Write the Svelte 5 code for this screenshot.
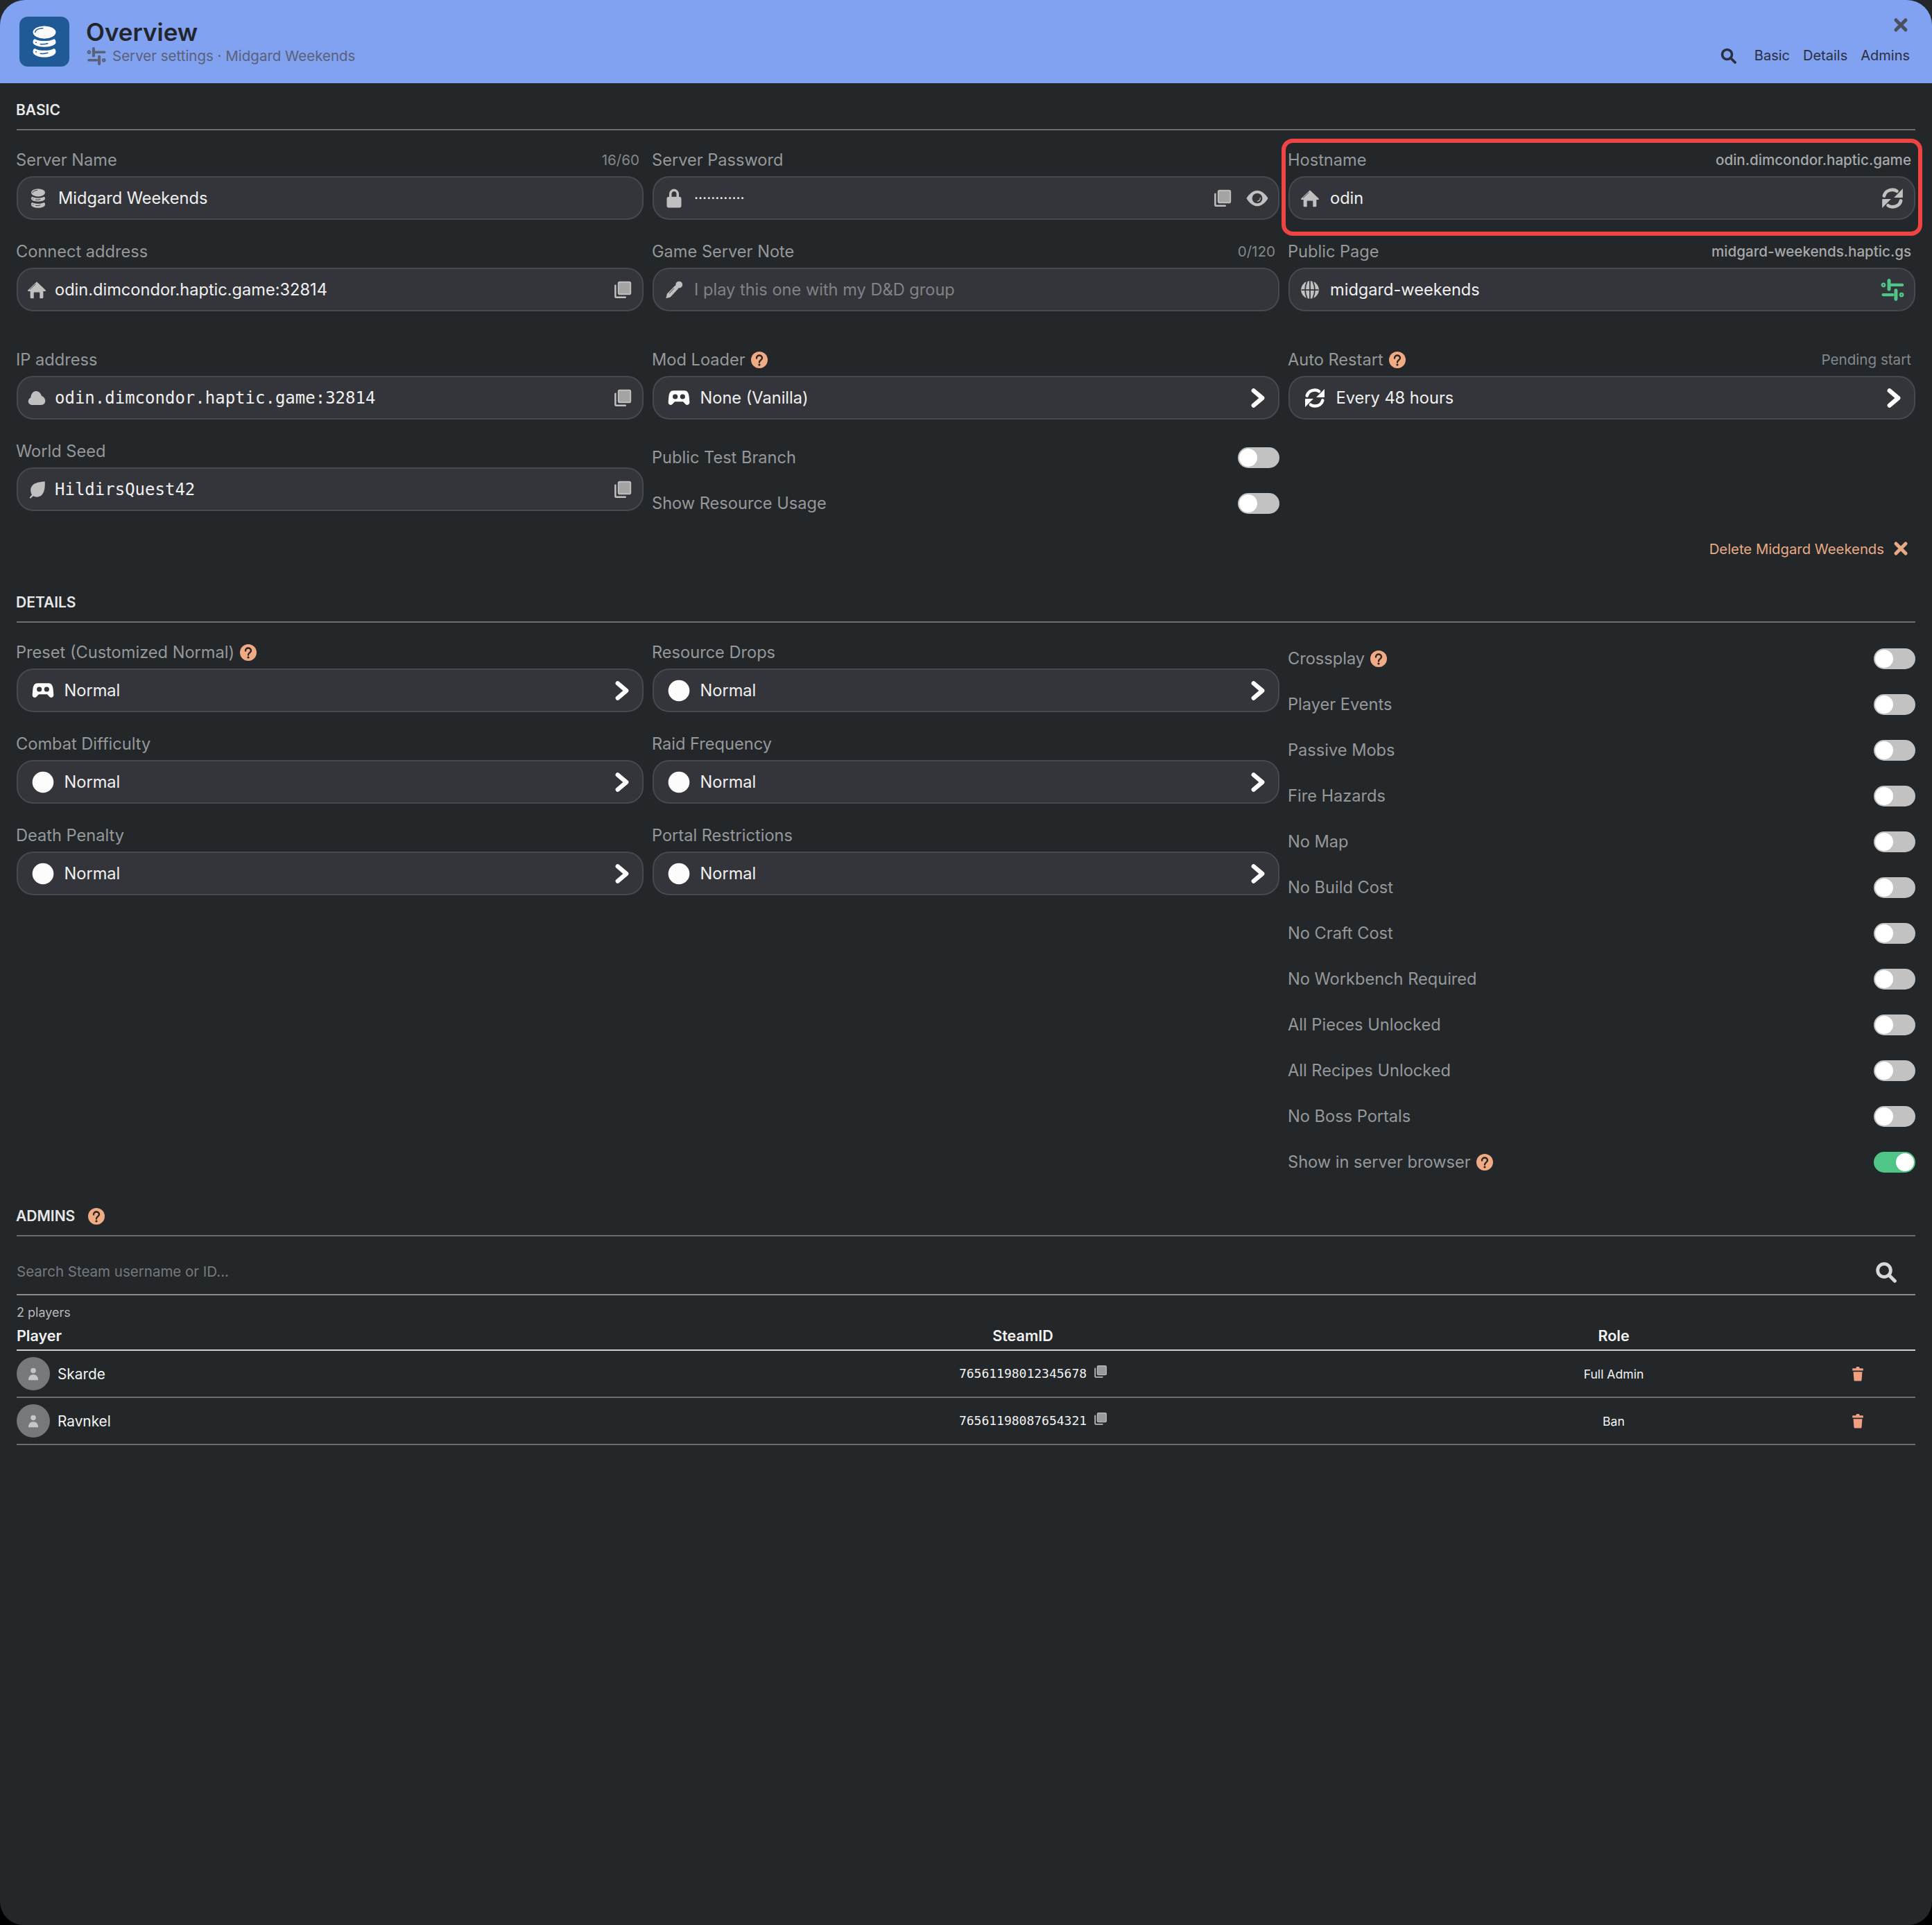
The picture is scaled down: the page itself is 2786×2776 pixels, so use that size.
<script>
  const hostSuffix = 'odin.dimcondor.haptic.game';

  const detailLeft = [
    { label: 'Preset (Customized Normal)', help: true, icon: 'pad', value: 'Normal' },
    { label: 'Combat Difficulty', icon: 'disc', value: 'Normal' },
    { label: 'Death Penalty', icon: 'disc', value: 'Normal' }
  ];
  const detailMid = [
    { label: 'Resource Drops', icon: 'disc', value: 'Normal' },
    { label: 'Raid Frequency', icon: 'disc', value: 'Normal' },
    { label: 'Portal Restrictions', icon: 'disc', value: 'Normal' }
  ];
  const toggles = [
    { label: 'Crossplay', help: true },
    { label: 'Player Events' },
    { label: 'Passive Mobs' },
    { label: 'Fire Hazards' },
    { label: 'No Map' },
    { label: 'No Build Cost' },
    { label: 'No Craft Cost' },
    { label: 'No Workbench Required' },
    { label: 'All Pieces Unlocked' },
    { label: 'All Recipes Unlocked' },
    { label: 'No Boss Portals' },
    { label: 'Show in server browser', help: true, on: true }
  ];
  const admins = [
    { name: 'Skarde', id: '76561198012345678', role: 'Full Admin' },
    { name: 'Ravnkel', id: '76561198087654321', role: 'Ban' }
  ];
</script>

{#snippet icon(name, cls = '')}
  <svg class="ic {cls}" viewBox="0 0 24 24" aria-hidden="true">
    {#if name === 'db'}
      <ellipse cx="12" cy="5" rx="8.6" ry="4.8" fill="currentColor" />
      <path d="M3.400 12.500c0-1.300.5-2.300 1.300-2.500 1.800 1 4.400 1.500 7.300 1.500s5.500-.5 7.300-1.500c.8.200 1.300 1.200 1.300 2.500 0 2-3.800 3.500-8.600 3.500s-8.600-1.500-8.600-3.500z" fill="currentColor" />
      <path d="M3.400 19.700c0-1.300.5-2.300 1.300-2.500 1.800 1 4.400 1.500 7.300 1.500s5.500-.5 7.300-1.500c.8.200 1.300 1.200 1.300 2.500 0 2.300-3.800 4.100-8.600 4.100s-8.600-1.800-8.600-4.100z" fill="currentColor" />
      <path d="M5 5c.3-1.500 2.500-2.800 5.800-3M5.500 12.700h.4M9 13.900c2 .2 4 0 5.500-.5M5.500 19.700h.4M9 21c2 .2 4 0 5.500-.5" fill="none" class="cut" stroke-width=".8" stroke-linecap="round" />
    {:else if name === 'home'}
      <path d="M12 2 23 12.500c.4.600 0 1.200-.7 1.200H20v7.800c0 .5-.4.900-.9.900h-3.400v-6.300c0-.6-.4-1-1-1H9.300c-.6 0-1 .4-1 1v6.300H4.900c-.5 0-.9-.4-.9-.9v-7.800H1.700c-.7 0-1.100-.6-.7-1.200z" fill="currentColor" />
      <path d="M3.500 11.500 10.500 5" fill="none" class="cut" stroke-width=".7" stroke-linecap="round" />
    {:else if name === 'copy'}
      <path d="M3.500 7v12.500c0 .6.400 1 1 1H15" fill="none" stroke="currentColor" stroke-width="2" stroke-linecap="round" />
      <rect x="7" y="3" width="14" height="14" rx="1.500" fill="currentColor" opacity=".8" />
      <rect x="7" y="3" width="14" height="14" rx="1.500" fill="none" stroke="currentColor" stroke-width="1.500" />
    {:else if name === 'eye'}
      <path d="M1 12C4 7 8 4 12 4s8 3 11 8c-3 5-7 8-11 8S4 17 1 12z" fill="currentColor" />
      <circle cx="12" cy="12" r="5.200" class="cutfill" />
      <path d="M15 11.500c.2 1.800-1 3.200-2.800 3.500" fill="none" stroke="currentColor" stroke-width=".8" stroke-linecap="round" />
    {:else if name === 'lock'}
      <path d="M7.500 12V6.500a4.500 4.500 0 0 1 9 0V12" fill="none" stroke="currentColor" stroke-width="3" />
      <rect x="3" y="10" width="18" height="13.500" rx="2.500" fill="currentColor" />
    {:else if name === 'pencil'}
      <circle cx="18.200" cy="5.600" r="4.200" fill="currentColor" />
      <path d="M13.800 6.200 17.600 10 7.500 21l-5.500 1.500L3.300 17z" fill="currentColor" />
      <path d="M12 10 6 16.500" class="cut" fill="none" stroke-width=".8" />
    {:else if name === 'cloud'}
      <path d="M6.500 20.500C3.500 20.500 1.500 18.500 1.500 16c0-2.200 1.500-4 3-4.500C5 7 7.500 3.500 11 3.500c3.500 0 6 2.500 7 6 2.500.8 4.500 3.200 4.500 6 0 3-2 5-5 5z" fill="currentColor" />
    {:else if name === 'leaf'}
      <path d="M22 2c.5 7-.5 13-3.500 16.500-3 3-7.500 3.500-11 1.500L4.500 23l-1.500-1 3-3.500C3.500 14 4 9 7.500 6 11 3.300 16.500 2.500 22 2z" fill="currentColor" />
    {:else if name === 'globe'}
      <circle cx="12" cy="12" r="11" fill="currentColor" />
      <path d="M12 1v22M1.500 12h21M8.500 1.500C5.500 8 5.500 16 8.500 22.500M15.500 1.500c3 6.500 3 14.500 0 21" fill="none" class="cut" stroke-width="1.500" />
    {:else if name === 'pad'}
      <path d="M6 4h12c3 0 4.500 2.500 5 6.500l.5 6c.2 2.500-2.500 4-4.500 2l-2.500-2.500h-9L5 18.500c-2 2-4.700.5-4.500-2l.5-6C1.500 6.500 3 4 6 4z" fill="currentColor" />
      <circle cx="8" cy="10.500" r="2.700" class="cutfill" />
      <circle cx="16" cy="10.500" r="2.700" class="cutfill" />
    {:else if name === 'disc'}
      <circle cx="12" cy="12" r="11.500" fill="currentColor" />
    {:else if name === 'refresh'}
      <g fill="none" stroke="currentColor" stroke-width="3.400" stroke-linecap="round">
        <path d="M3.500 9.500C4.500 5.500 8 3.300 12 3.300c1.800 0 3.300.5 4.500 1.400" />
        <path d="M20.500 14.500c-1 4-4.500 6.200-8.500 6.200-1.800 0-3.300-.5-4.500-1.400" />
      </g>
      <path d="M22.500 2.200v8.300c0 .5-.3.800-.8.800h-8.200z" fill="currentColor" />
      <path d="M1.500 21.800v-8.300c0-.5.300-.8.800-.8h8.200z" fill="currentColor" />
    {:else if name === 'sliders'}
      <g fill="none" stroke="currentColor" stroke-linecap="round">
        <circle cx="2.800" cy="7" r="1.500" stroke-width="1.800" />
        <path d="M8.500 2.500v9" stroke-width="3.500" />
        <path d="M9.500 7h12.500" stroke-width="3" />
        <path d="M2.500 17h10" stroke-width="3" />
        <path d="M15.500 12.500v9" stroke-width="3.500" />
        <circle cx="21.200" cy="17" r="1.500" stroke-width="1.800" />
      </g>
    {:else if name === 'chev'}
      <path d="M7 3.500 17 12 7 20.500" fill="none" stroke="currentColor" stroke-width="5" stroke-linecap="round" stroke-linejoin="round" />
    {:else if name === 'x'}
      <path d="M5 5 19 19M19 5 5 19" fill="none" stroke="currentColor" stroke-width="5" stroke-linecap="round" />
    {:else if name === 'search'}
      <circle cx="10.500" cy="10.500" r="7" fill="none" stroke="currentColor" stroke-width="3.600" />
      <path d="M16 16 22 22" fill="none" stroke="currentColor" stroke-width="3.800" stroke-linecap="round" />
    {:else if name === 'help'}
      <circle cx="12" cy="12" r="12" fill="#f0ab85" />
      <path d="M8 9.500c0-2.500 1.800-4 4-4s4 1.500 4 3.700c0 3.300-4 3-4 6.300" fill="none" stroke="#2a2420" stroke-width="2.400" stroke-linecap="round" />
      <circle cx="12" cy="19" r="1.600" fill="#2a2420" />
    {:else if name === 'trash'}
      <path d="M9 3.500 10 1h4l1 2.500h4.500c.6 0 1 .5 1 1V7h-17V4.500c0-.5.4-1 1-1z" fill="currentColor" />
      <path d="M5 9h14l-1 13c-.1.800-.7 1.500-1.500 1.500h-9C6.700 23.500 6.100 22.800 6 22z" fill="currentColor" />
    {:else if name === 'user'}
      <circle cx="12" cy="6.500" r="4.500" fill="currentColor" />
      <path d="M3.500 23c0-5.500 3-9.500 8.500-9.500s8.500 4 8.500 9.500z" fill="currentColor" />
    {/if}
  </svg>
{/snippet}

{#snippet label(text, help = false, hint = '', hintClass = '')}
  <div class="label-row">
    <span class="label">{text}</span>
    {#if help}{@render icon('help', 'help')}{/if}
    {#if hint}<span class="hint {hintClass}">{hint}</span>{/if}
  </div>
{/snippet}

{#snippet select(item)}
  <div class="cell">
    {@render label(item.label, item.help)}
    <div class="field">
      {@render icon(item.icon, 'lead wide bright')}
      <span class="value">{item.value}</span>
      {@render icon('chev', 'chev')}
    </div>
  </div>
{/snippet}

{#snippet switchRow(text, help, on)}
  <div class="switch-row">
    <span class="label">{text}</span>
    {#if help}{@render icon('help', 'help')}{/if}
    <span class="switch" class:on><span class="knob"></span></span>
  </div>
{/snippet}

<div class="window">
  <header class="top">
    <div class="logo">{@render icon('db', 'logo-ic')}</div>
    <div class="titles">
      <h1>Overview</h1>
      <div class="crumb">{@render icon('sliders', 'crumb-ic')}<span>Server settings · Midgard Weekends</span></div>
    </div>
    <div class="top-right">
      {@render icon('x', 'close')}
      <nav>
        {@render icon('search', 'nav-search')}
        <span>Basic</span><span>Details</span><span>Admins</span>
      </nav>
    </div>
  </header>

  <main class="content">
    <section>
      <h2 class="section-head">BASIC</h2>
      <div class="grid3">
        <div class="cell">
          {@render label('Server Name', false, '16/60')}
          <div class="field">
            {@render icon('db', 'lead dim')}
            <span class="value">Midgard Weekends</span>
          </div>
        </div>
        <div class="cell">
          {@render label('Server Password')}
          <div class="field">
            {@render icon('lock', 'lead dim')}
            <span class="value dots">············</span>
            {@render icon('copy', 'trail dim')}
            {@render icon('eye', 'eye dim')}
          </div>
        </div>
        <div class="cell">
          <div class="hostname-mark"></div>
          {@render label('Hostname', false, hostSuffix, 'strong')}
          <div class="field">
            {@render icon('home', 'lead dim')}
            <span class="value">odin</span>
            {@render icon('refresh', 'trail-lg dim')}
          </div>
        </div>

        <div class="cell">
          {@render label('Connect address')}
          <div class="field">
            {@render icon('home', 'lead tight dim')}
            <span class="value">odin.dimcondor.haptic.game:32814</span>
            {@render icon('copy', 'trail dim')}
          </div>
        </div>
        <div class="cell">
          {@render label('Game Server Note', false, '0/120')}
          <div class="field">
            {@render icon('pencil', 'lead dim')}
            <span class="value placeholder">I play this one with my D&amp;D group</span>
          </div>
        </div>
        <div class="cell">
          {@render label('Public Page', false, 'midgard-weekends.haptic.gs', 'strong')}
          <div class="field">
            {@render icon('globe', 'lead dim')}
            <span class="value">midgard-weekends</span>
            {@render icon('sliders', 'trail-lg green')}
          </div>
        </div>
      </div>

      <div class="grid3 lower">
        <div class="cell">
          {@render label('IP address')}
          <div class="field">
            {@render icon('cloud', 'lead tight dim')}
            <span class="value mono">odin.dimcondor.haptic.game:32814</span>
            {@render icon('copy', 'trail dim')}
          </div>
        </div>
        <div class="cell">
          {@render label('Mod Loader', true)}
          <div class="field">
            {@render icon('pad', 'lead wide bright')}
            <span class="value">None (Vanilla)</span>
            {@render icon('chev', 'chev')}
          </div>
        </div>
        <div class="cell">
          {@render label('Auto Restart', true, 'Pending start')}
          <div class="field">
            {@render icon('refresh', 'lead wide bright')}
            <span class="value">Every 48 hours</span>
            {@render icon('chev', 'chev')}
          </div>
        </div>

        <div class="cell">
          {@render label('World Seed')}
          <div class="field">
            {@render icon('leaf', 'lead tight dim')}
            <span class="value mono">HildirsQuest42</span>
            {@render icon('copy', 'trail dim')}
          </div>
        </div>
        <div class="switch-stack">
          {@render switchRow('Public Test Branch', false, false)}
          {@render switchRow('Show Resource Usage', false, false)}
        </div>
      </div>

      <div class="delete-row">
        <span>Delete Midgard Weekends</span>
        {@render icon('x', 'delete-x')}
      </div>
    </section>

    <section class="details">
      <h2 class="section-head">DETAILS</h2>
      <div class="grid3">
        <div class="stack">{#each detailLeft as item}{@render select(item)}{/each}</div>
        <div class="stack">{#each detailMid as item}{@render select(item)}{/each}</div>
        <div class="switch-stack">
          {#each toggles as t}{@render switchRow(t.label, t.help, t.on)}{/each}
        </div>
      </div>
    </section>

    <section class="admins">
      <h2 class="section-head">ADMINS {@render icon('help', 'help')}</h2>
      <div class="search">
        <span>Search Steam username or ID...</span>
        {@render icon('search', 'search-ic')}
      </div>
      <div class="count">2 players</div>
      <div class="table">
        <div class="row head">
          <span>Player</span>
          <span class="mid">SteamID</span>
          <span class="mid">Role</span>
          <span></span>
        </div>
        {#each admins as a}
          <div class="row">
            <div class="player">
              <span class="avatar">{@render icon('user', 'user-ic')}</span>
              <span>{a.name}</span>
            </div>
            <div class="mid">
              <span class="steam">{a.id}{@render icon('copy', 'id-copy')}</span>
            </div>
            <div class="mid role">{a.role}</div>
            <div class="mid">{@render icon('trash', 'trash')}</div>
          </div>
        {/each}
      </div>
    </section>
  </main>
</div>

<style>
  :global(body) {
    margin: 0;
    background: #000;
  }

  .window {
    min-height: 2776px;
    background: #23272a;
    border-radius: 0 0 34px 34px;
    color: #f2f2f2;
    font-family: Inter, 'Liberation Sans', sans-serif;
    font-size: 23.6px;
  }

  .ic {
    display: block;
    flex: none;
    width: 24px;
    height: 24px;
  }
  .cut {
    stroke: #1f5a96;
  }
  .cutfill {
    fill: #34353a;
  }

  /* header */
  .top {
    display: flex;
    align-items: center;
    height: 120px;
    box-sizing: border-box;
    padding: 0 32px 0 28px;
    background: #81a1f1;
    border-radius: 36px 36px 0 0;
    color: #22262c;
  }
  .logo {
    display: grid;
    place-items: center;
    width: 72px;
    height: 72px;
    border-radius: 12px;
    background: #1f5a96;
    color: #fbfbfb;
  }
  .logo-ic {
    width: 46px;
    height: 46px;
  }
  .titles {
    margin-left: 24px;
  }
  h1 {
    margin: 0;
    font-size: 35px;
    line-height: 40px;
    font-weight: 600;
  }
  .crumb {
    display: flex;
    align-items: center;
    gap: 9px;
    margin-top: 1px;
    font-size: 20.5px;
    line-height: 28px;
    color: #596278;
  }
  .crumb-ic {
    width: 28px;
    height: 28px;
    margin-left: 1px;
  }
  .top-right {
    display: flex;
    flex-direction: column;
    align-items: flex-end;
    margin-left: auto;
    height: 100%;
    padding-top: 24px;
    box-sizing: border-box;
  }
  .close {
    color: #4a5060;
    margin-right: 1px;
  }
  nav {
    display: flex;
    align-items: center;
    gap: 19px;
    margin-top: 18px;
    font-size: 20px;
    line-height: 28px;
    color: #2a3040;
  }
  .nav-search {
    width: 24px;
    height: 24px;
    margin-right: 7px;
  }

  /* sections */
  .content {
    padding: 27px 24px 0;
  }
  .section-head {
    display: flex;
    align-items: center;
    gap: 19px;
    margin: 0 0 26px;
    padding-bottom: 15px;
    border-bottom: 2px solid #6b6e71;
    font-size: 21px;
    line-height: 24px;
    font-weight: 600;
    color: #e8e8e8;
    text-indent: -1px;
  }
  .details,
  .admins {
    margin-top: 50px;
  }
  .grid3 {
    display: grid;
    grid-template-columns: repeat(3, 1fr);
    column-gap: 13px;
  }
  .grid3.lower {
    margin-top: 24px;
  }
  .stack {
    display: flex;
    flex-direction: column;
  }
  .cell {
    position: relative;
    height: 132px;
  }

  .label-row {
    display: flex;
    align-items: center;
    gap: 8px;
    height: 40px;
    box-sizing: border-box;
    padding: 0 6px 7px 0;
    margin-left: -1px;
  }
  .label {
    font-size: 23.6px;
    line-height: 32px;
    color: #96989a;
  }
  .hint {
    margin-left: auto;
    font-size: 20.6px;
    color: #84878a;
  }
  .hint.strong {
    font-weight: 500;
    color: #a6a8aa;
  }
  .help {
    width: 24px;
    height: 24px;
  }

  .field {
    display: flex;
    align-items: center;
    height: 63px;
    box-sizing: border-box;
    padding: 0 17px 0 15px;
    background: #34353a;
    border: 2px solid #46494d;
    border-radius: 24px;
  }
  .lead {
    width: 28px;
    height: 28px;
    margin-right: 15px;
  }
  .lead.tight {
    margin-left: -2px;
    margin-right: 12px;
  }
  .lead.wide {
    width: 32px;
    height: 32px;
    margin-left: 4.500px;
    margin-right: 15px;
  }
  .dim {
    color: #c0c0c0;
  }
  .dim .cut {
    stroke: #34353a;
  }
  .bright {
    color: #fcfcfc;
  }
  .green {
    color: #4fc586;
  }
  .value {
    flex: 1;
    font-size: 23.6px;
    color: #f0f0f0;
    white-space: nowrap;
  }
  .placeholder {
    color: #808285;
  }
  .mono {
    font-family: 'DejaVu Sans Mono', monospace;
    font-size: 24px;
  }
  .dots {
    font-size: 21px;
  }
  .trail {
    width: 30px;
    height: 30px;
    margin-right: -4px;
  }
  .trail-lg {
    width: 34px;
    height: 34px;
    margin-right: -3px;
  }
  .eye {
    width: 34px;
    height: 34px;
    margin-left: 22px;
    margin-right: -3.500px;
  }
  .chev {
    width: 30px;
    height: 30px;
    margin-right: -3px;
    color: #fcfcfc;
  }

  .hostname-mark {
    position: absolute;
    left: -10px;
    right: -10px;
    top: -14px;
    height: 140px;
    box-sizing: border-box;
    border: 6px solid #ef4444;
    border-radius: 16px;
    pointer-events: none;
  }

  /* switches */
  .switch-stack {
    display: flex;
    flex-direction: column;
    gap: 34px;
    padding-top: 10px;
  }
  .switch-row {
    display: flex;
    align-items: center;
    gap: 8px;
    height: 32px;
    margin-left: -1px;
  }
  .switch {
    position: relative;
    margin-left: auto;
    width: 60px;
    height: 30px;
    border-radius: 15px;
    background: #c2c2c2;
  }
  .switch.on {
    background: #4fc586;
  }
  .knob {
    position: absolute;
    left: 2px;
    top: 2px;
    width: 26px;
    height: 26px;
    border-radius: 50%;
    background: #fff;
  }
  .on .knob {
    left: 32px;
  }

  .delete-row {
    display: flex;
    justify-content: flex-end;
    align-items: center;
    gap: 12px;
    height: 32px;
    margin-top: 9px;
    padding-right: 9px;
    font-size: 20.3px;
    color: #eaa985;
  }
  .delete-x {
    width: 24px;
    height: 24px;
  }

  /* admins */
  .search {
    display: flex;
    align-items: center;
    justify-content: space-between;
    height: 85px;
    box-sizing: border-box;
    margin-top: -26px;
    padding: 18px 27px 0 0;
    border-bottom: 2px solid #8a8b8d;
    font-size: 20.5px;
    color: #76797b;
  }
  .search-ic {
    width: 32px;
    height: 32px;
    color: #d8d8d8;
  }
  .count {
    margin-top: 13px;
    font-size: 18px;
    line-height: 24px;
    color: #b8b8b8;
  }
  .row {
    display: grid;
    grid-template-columns: 868px 1166px 538px 166px;
    align-items: center;
    height: 68px;
    box-sizing: border-box;
    border-bottom: 2px solid #6b6e71;
    font-size: 20.8px;
  }
  .row.head {
    height: 43px;
    border-bottom-color: #cfcfcf;
    font-size: 21.5px;
    font-weight: 600;
    color: #f2f2f2;
  }
  .mid {
    display: flex;
    justify-content: center;
    text-align: center;
  }
  .player {
    display: flex;
    align-items: center;
    gap: 11px;
  }
  .avatar {
    display: grid;
    place-items: center;
    width: 48px;
    height: 48px;
    border-radius: 50%;
    background: #76787a;
  }
  .user-ic {
    width: 20px;
    height: 20px;
    color: #c6c6c6;
  }
  .steam {
    position: relative;
    top: -1px;
    font-family: 'DejaVu Sans Mono', monospace;
    font-size: 18px;
  }
  .id-copy {
    position: absolute;
    left: calc(100% + 8.500px);
    top: -3px;
    width: 22px;
    height: 22px;
    color: #b8b8b8;
  }
  .role {
    font-size: 17.6px;
  }
  .trash {
    width: 22px;
    height: 22px;
    color: #f0a080;
  }
</style>
